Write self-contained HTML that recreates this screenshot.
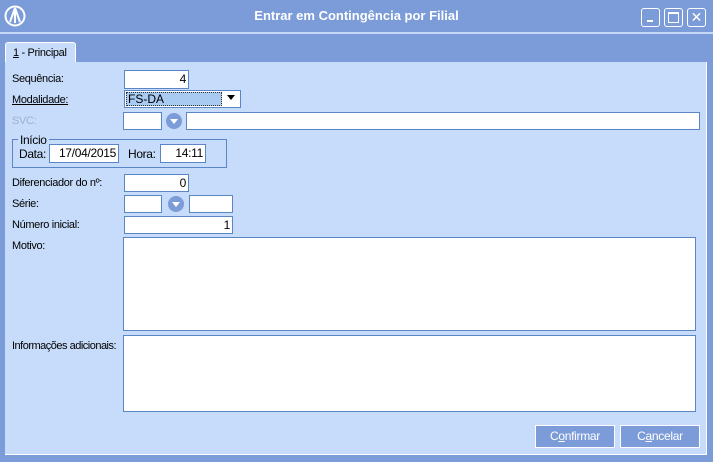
<!DOCTYPE html><html><head><style>
*{margin:0;padding:0;box-sizing:border-box}
body{width:713px;height:462px;background:#7b9cd8;font-family:"Liberation Sans",Arial,sans-serif;font-size:11px;color:#000;position:relative;overflow:hidden}
.a{position:absolute}
.in{position:absolute;background:#fff;border:1px solid #5b86c6;text-align:right;padding-right:2px;line-height:16px;font-size:12px;letter-spacing:-0.3px}
.l{position:absolute;font-size:11px;letter-spacing:-0.35px}
.circ{position:absolute;width:16px;height:16px;border-radius:50%;background:#7b9cd8}
.circ:after{content:"";position:absolute;left:4px;top:6px;border-left:4px solid transparent;border-right:4px solid transparent;border-top:5px solid #fff}
.btn{position:absolute;background:#7b9cd8;border:1px solid #fff;color:#fff;text-align:center;font-size:12px;line-height:20px;letter-spacing:-0.3px}
.tb{position:absolute;top:8px;width:19px;height:19px;border:1px solid #fff;border-radius:3px}
</style></head><body>
<div class="a" style="left:0;top:0;width:713px;height:33px;background:#7b9cd8"></div>
<div class="a" style="left:0;top:32px;width:713px;height:2px;background:#c4d8f6"></div>
<svg class="a" style="left:4px;top:5px" width="22" height="22" viewBox="0 0 22 22"><circle cx="11" cy="11" r="9.5" fill="none" stroke="#fff" stroke-width="2"/><path d="M11 3 L6 17 M11 3 L16 17 M11 5 V18" stroke="#fff" stroke-width="2" fill="none"/></svg>
<div class="a" style="left:0;top:8px;width:713px;text-align:center;color:#fff;font-weight:bold;font-size:13px">Entrar em Contingência por Filial</div>
<div class="tb" style="left:641px"><div class="a" style="left:5px;top:11px;width:6px;height:2px;background:#fff"></div></div>
<div class="tb" style="left:664px"><div class="a" style="left:3px;top:3px;width:11px;height:11px;border:1px solid #fff;border-top-width:2px"></div></div>
<div class="tb" style="left:687px;color:#fff;font-size:14px;line-height:16px;text-align:center">✕</div>
<div class="a" style="left:3px;top:37px;width:706px;height:421px;background:#7b9cd8"></div>
<div class="a" style="left:5px;top:42px;width:71px;height:22px;background:#c6dcfa;border:1px solid #fff;border-bottom:none;border-radius:3px 3px 0 0;padding:4px 0 0 7px;font-size:11px;letter-spacing:-0.35px"><u>1</u> - Principal</div>
<div class="a" style="left:5px;top:62px;width:702px;height:393px;background:#c6dcfa;border-right:1px solid #fff;border-bottom:1px solid #fff"></div>
<div class="l" style="left:12px;top:73px">Sequência:</div>
<div class="in" style="left:124px;top:70px;width:65px;height:19px">4</div>
<div class="l" style="left:12px;top:94px;text-decoration:underline">Modalidade:</div>
<div class="a" style="left:124px;top:90px;width:117px;height:18px;background:#fff;border:1px solid #5b86c6"></div>
<div class="a" style="left:126px;top:92px;width:96px;height:14px;background:#a9cbf2;border:1px dotted #333;font-size:12px;line-height:12px;padding-left:1px">FS-DA</div>
<div class="a" style="left:227px;top:95px;border-left:4px solid transparent;border-right:4px solid transparent;border-top:5px solid #000"></div>
<div class="l" style="left:12px;top:115px;color:#a0b0cc">SVC:</div>
<div class="in" style="left:123px;top:112px;width:39px;height:18px"></div>
<div class="circ" style="left:166px;top:113px"></div>
<div class="in" style="left:186px;top:112px;width:514px;height:18px"></div>
<div class="a" style="left:12px;top:139px;width:215px;height:29px;border:1px solid #5b86c6"></div>
<div class="l" style="left:18px;top:133px;background:#c6dcfa;padding:0 2px;font-size:12px">Início</div>
<div class="l" style="left:19px;top:147px;font-size:12px">Data:</div>
<div class="in" style="left:49px;top:144px;width:70px;height:19px">17/04/2015</div>
<div class="l" style="left:128px;top:147px;font-size:12px">Hora:</div>
<div class="in" style="left:160px;top:144px;width:46px;height:19px">14:11</div>
<div class="l" style="left:12px;top:177px">Diferenciador do nº:</div>
<div class="in" style="left:124px;top:174px;width:65px;height:18px">0</div>
<div class="l" style="left:12px;top:198px">Série:</div>
<div class="in" style="left:124px;top:195px;width:38px;height:18px"></div>
<div class="circ" style="left:168px;top:196px"></div>
<div class="in" style="left:189px;top:195px;width:44px;height:18px"></div>
<div class="l" style="left:12px;top:219px">Número inicial:</div>
<div class="in" style="left:124px;top:216px;width:109px;height:18px">1</div>
<div class="l" style="left:12px;top:240px">Motivo:</div>
<div class="in" style="left:123px;top:237px;width:573px;height:94px"></div>
<div class="l" style="left:12px;top:340px;letter-spacing:-0.5px">Informações adicionais:</div>
<div class="in" style="left:123px;top:335px;width:573px;height:77px"></div>
<div class="btn" style="left:535px;top:425px;width:80px;height:23px">C<u>o</u>nfirmar</div>
<div class="btn" style="left:620px;top:425px;width:80px;height:23px">C<u>a</u>ncelar</div>
</body></html>
